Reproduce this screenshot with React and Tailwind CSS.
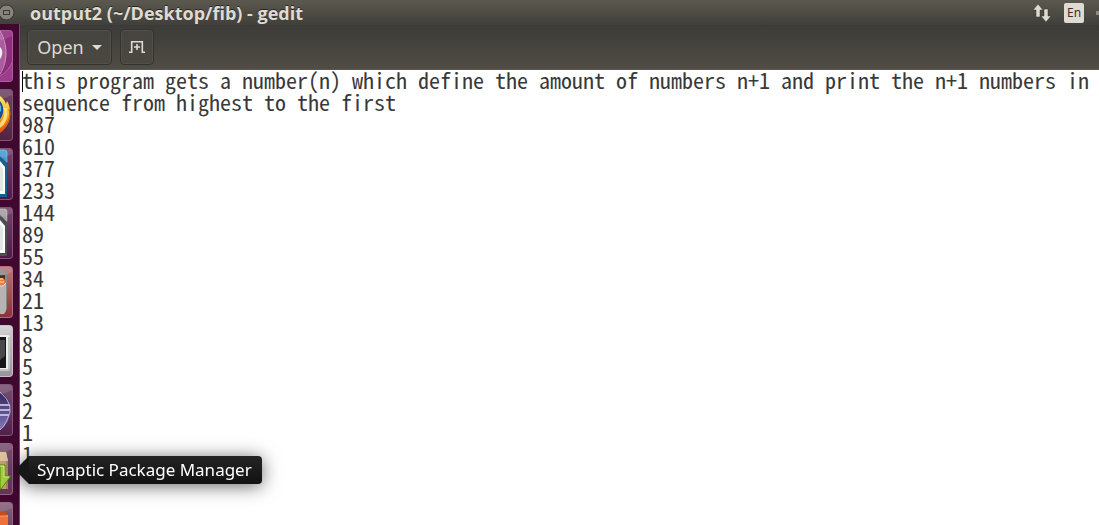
import React from "react";

const TEXT = [
  "this program gets a number(n) which define the amount of numbers n+1 and print the n+1 numbers in sequence from highest to the first",
  987, 610, 377, 233, 144, 89, 55, 34, 21, 13, 8, 5, 3, 2, 1, 1,
].join("\n");

function Dash() {
  return (
    <>
      <path d="M0 3C8 17 8 29 0 42Z" fill="#cf9cc5" opacity=".45" />
      <path d="M0 1C8 15 8 31 0 44" fill="none" stroke="#dcb5d4" strokeWidth=".8" />
      <path d="M0 17C3 20 3 25 0 29Z" fill="#f6edf4" />
      <path d="M0 46Q8 42 13 31V51H0Z" fill="#a94b98" opacity=".5" />
      <path d="M0 46Q8 42 13 31" fill="none" stroke="#b55fa5" strokeWidth="1" />
    </>
  );
}

function Firefox() {
  return (
    <>
      <defs>
        <linearGradient id="fox" x1="0" y1="0" x2="0" y2="1">
          <stop offset="0" stopColor="#ffe566" />
          <stop offset=".5" stopColor="#fbb416" />
          <stop offset="1" stopColor="#df4a0b" />
        </linearGradient>
      </defs>
      <path d="M0 7C3 9 5 12 6 15L7 12C11 18 12 31 6 38Q3 42 0 44Z" fill="url(#fox)" />
      <path d="M0 12Q4 17 3 24Q2 28 0 30Z" fill="#174f91" />
      <path d="M0 15Q2 18 1 22L0 23Z" fill="#63b4e5" />
      <path d="M4 19Q6 28 0 34V39Q9 33 7 19Z" fill="#fff3a0" opacity=".75" />
      <path d="M9 20Q12 31 2 41" fill="none" stroke="#e85c0b" strokeWidth="1.2" />
    </>
  );
}

function Office({ light, dark }) {
  return (
    <>
      <path d="M0 2H6L7 3V15L0 8Z" fill={light} />
      <path d="M0 8L7 16V49H0Z" fill={dark} />
      <path d="M0 13L5 19V46H0Z" fill="#fff" />
      <path d="M0 17L3 21V43H0Z" fill="#e4e5e5" />
      <path d="M0 2H5L7 4V14" fill="none" stroke="#fff" strokeWidth=".6" opacity=".5" />
    </>
  );
}

function Files() {
  return (
    <>
      <path d="M0 4H5L7 7V43L5 45H0Z" fill="#898989" />
      <path d="M0 9H5V22H0Z" fill="#4c3026" />
      <path d="M0 12H3L5 14V20H0Z" fill="#f27b3a" />
      <path d="M0 16H4M0 13H3" stroke="#ffe0b4" strokeWidth="1" />
      <path d="M0 20H3L6 17V45L4 48H0Z" fill="#b5b4b3" />
      <path d="M0 20H3L6 17" fill="none" stroke="#e5e3e1" strokeWidth="1" />
    </>
  );
}

function Terminal() {
  return (
    <>
      <path d="M0 10H8Q10 10 10 12V43Q10 46 8 46H0Z" fill="#eeeeee" />
      <path d="M9 12V45H0" fill="none" stroke="#9c9c9c" strokeWidth="1" />
      <path d="M0 12H6V43H0Z" fill="#171717" />
      <path d="M0 15H5V31L0 35Z" fill="#494949" />
    </>
  );
}

function Eclipse() {
  return (
    <>
      <defs>
        <linearGradient id="globe" x1="0" y1="0" x2="0" y2="1">
          <stop offset="0" stopColor="#33255a" />
          <stop offset="1" stopColor="#8379bb" />
        </linearGradient>
      </defs>
      <path d="M0 8Q10 13 11 25Q10 39 0 46Z" fill="url(#globe)" />
      <path d="M0 21H10M0 26H10M0 31H9" stroke="#dcd8f3" strokeWidth="1.5" />
      <path d="M0 8Q16 21 7 36Q4 43 0 46" fill="none" stroke="#b8addc" strokeWidth="1" />
    </>
  );
}

function Synaptic() {
  return (
    <>
      <path d="M0 9H6L8 18V46H0Z" fill="#bf9e72" />
      <path d="M0 9H6L8 18H0Z" fill="#dbc29d" />
      <path d="M7 18V46" stroke="#8c6c43" strokeWidth="1" />
      <path d="M0 22H5V33H11L1 46H0Z" fill="#a2cf3c" stroke="#53830d" strokeWidth="1" />
      <path d="M0 23H4V34H9" fill="none" stroke="#d7ed8d" strokeWidth="1" />
    </>
  );
}

function Software() {
  return (
    <>
      <path d="M0 13H8V52H0Z" fill="#ee7137" />
      <path d="M0 10H6V14H0Z" fill="#c44c1d" />
      <path d="M0 14H8" stroke="#ff9c68" strokeWidth="1" />
    </>
  );
}

const LAUNCHERS = [
  ["Search your computer", "bg-[#8f2c7e] border-[#b05ca2]", <Dash />],
  ["Firefox Web Browser", "bg-linear-to-b from-[#6d4565] to-[#53233f] border-[#7e5874]", <Firefox />],
  ["LibreOffice Writer", "bg-linear-to-b from-[#74466b] to-[#4f1947] border-[#81567a]", <Office light="#3f9bd0" dark="#15628f" />],
  ["LibreOffice Impress", "bg-linear-to-b from-[#74466b] to-[#4f1947] border-[#81567a]", <Office light="#a0a09e" dark="#4b4f50" />],
  ["Files", "bg-linear-to-b from-[#ba7676] to-[#88323d] border-[#b76e73]", <Files />],
  ["Terminal", "bg-linear-to-b from-[#cfcbce] to-[#99959a] border-[#c8c4c8]", <Terminal />],
  ["Eclipse", "bg-linear-to-b from-[#77516f] to-[#51204b] border-[#81567a]", <Eclipse />],
  ["Synaptic Package Manager", "bg-linear-to-b from-[#77516f] to-[#653358] border-[#916887]", <Synaptic />],
  ["Ubuntu Software", "bg-linear-to-b from-[#846078] to-[#5d294d] border-[#916887]", <Software />],
];

function Launcher() {
  return (
    <nav aria-label="Launcher" className="-mt-px flex w-5 shrink-0 flex-col gap-[7px] overflow-hidden border-r border-[#774b6e] bg-[#40082f] pt-1.5">
      {LAUNCHERS.map(([name, style, art]) => (
        <button key={name} aria-label={name} className={`h-[52px] w-[13px] shrink-0 overflow-hidden rounded-r border-y border-r ${style}`}>
          <svg viewBox="0 1 12 50" className="block h-full w-full" aria-hidden="true">
            {art}
            <path d="M0 1H12V6Q7 9 0 10Z" fill="#fff" opacity=".12" />
          </svg>
        </button>
      ))}
    </nav>
  );
}

function TopBar() {
  return (
    <header className="flex h-[25px] shrink-0 items-center bg-linear-to-b from-[#5b594f] to-[#403f3a] text-[#dfdbd2]">
      <button aria-label="Restore window" className="w-[30px] shrink-0">
        <svg viewBox="0 0 30 24" className="block h-6 w-[30px]">
          <circle cx="6.5" cy="11.5" r="7.5" fill="#85837b" stroke="#34332e" />
          <rect x="3.5" y="9.5" width="6" height="4" fill="none" stroke="#3b3a35" />
        </svg>
      </button>
      <h1 className="whitespace-nowrap font-['Open_Sans','Noto_Sans',sans-serif] text-[18px] leading-[22px] font-bold [text-shadow:0_-1px_#292824]">output2 (~/Desktop/fib) - gedit</h1>
      <div className="ml-auto flex items-center">
        <button aria-label="Network">
          <svg viewBox="0 0 20 20" className="block h-5 w-5" fill="#dfdbd2">
            <path d="M6 1L11 7H8V14H4V7H1ZM14 19L9 13H12V6H16V13H19Z" stroke="#34332e" strokeWidth=".5" />
          </svg>
        </button>
        <button className="ml-3 h-5 w-5 rounded-xs bg-[#dfdbd2] text-[12px] leading-5 text-[#34332e]">En</button>
        <div className="ml-3 h-1 w-[3px] bg-[#8c8a82]" />
      </div>
    </header>
  );
}

function Toolbar() {
  return (
    <div className="flex h-[45px] shrink-0 items-center gap-2 border-b border-[#5c584f] bg-linear-to-b from-[#3c3b37] to-[#504d46] px-[7px] text-[#dfdbd2]">
      <button className="flex h-9 w-[85px] items-center justify-center gap-2 rounded border border-[#34332f] bg-linear-to-b from-[#45443f] to-[#4b4842] text-[18px] shadow-[inset_0_0_0_1px_#525048]">
        Open
        <svg viewBox="0 0 10 5" className="h-[5px] w-2.5" fill="currentColor" aria-hidden="true"><path d="M0 0H10L5 5Z" /></svg>
      </button>
      <button aria-label="Create a new document" className="flex h-9 w-[34px] items-center justify-center rounded border border-[#34332f] bg-linear-to-b from-[#45443f] to-[#4b4842] shadow-[inset_0_0_0_1px_#525048]">
        <svg viewBox="0 0 16 14" className="h-3.5 w-4" fill="none" stroke="currentColor" strokeWidth="1.6">
          <path d="M0 12.2H2.7V1.8H13.3V12.2H16M8 4V10M5 7H11" />
        </svg>
      </button>
    </div>
  );
}

export default function App() {
  return (
    <div className="flex h-screen flex-col overflow-hidden bg-white font-['Noto_Sans',sans-serif]">
      <TopBar />
      <div className="relative flex min-h-0 flex-1">
        <Launcher />
        <main className="flex min-w-0 flex-1 flex-col">
          <Toolbar />
          <div className="relative flex min-h-0 flex-1">
            <textarea
              aria-label="Document text"
              spellCheck={false}
              defaultValue={TEXT}
              className="-mt-0.5 w-full resize-none overflow-hidden bg-transparent pl-0.5 font-['Noto_Sans_Mono_CJK_SC','DejaVu_Sans_Mono',monospace] text-[22px] leading-[22px] text-[#393939] outline-none"
            />
            <div className="absolute top-px left-0.5 h-[21px] w-px bg-black" />
          </div>
        </main>
        <div role="tooltip" className="absolute top-[431px] left-[15px] flex items-center drop-shadow-[0_2px_9px_rgba(0,0,0,0.6)]">
          <svg viewBox="0 0 14 28" className="h-7 w-3.5" fill="#171717" aria-hidden="true">
            <path d="M14 0L0 14L14 28Z" />
          </svg>
          <span className="h-7 rounded-r bg-linear-to-b from-[#242424] to-[#121212] pr-2.5 pl-2 text-[17px] leading-7 whitespace-nowrap text-white">
            Synaptic Package Manager
          </span>
        </div>
      </div>
    </div>
  );
}
